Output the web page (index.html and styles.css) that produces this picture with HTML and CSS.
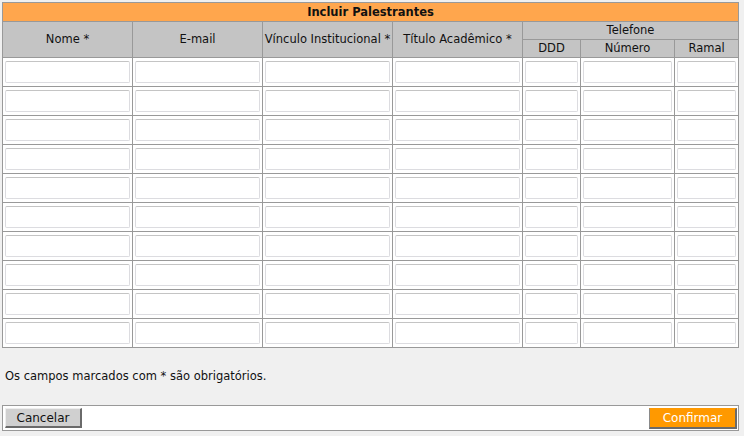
FILE: index.html
```html
<!DOCTYPE html>
<html lang="pt">
<head>
<meta charset="utf-8">
<title>Incluir Palestrantes</title>
<link rel="stylesheet" href="styles.css">
</head>
<body>
<div class="page">
  <table class="grid">
    <colgroup>
      <col class="c-wide"><col class="c-wide"><col class="c-wide"><col class="c-wide">
      <col class="c-ddd"><col class="c-num"><col class="c-ramal">
    </colgroup>
    <thead>
      <tr><th class="title" colspan="7">Incluir Palestrantes</th></tr>
      <tr class="h1">
        <th rowspan="2">Nome *</th>
        <th rowspan="2">E-mail</th>
        <th rowspan="2">Vínculo Institucional *</th>
        <th rowspan="2">Título Acadêmico *</th>
        <th colspan="3">Telefone</th>
      </tr>
      <tr class="h2">
        <th>DDD</th>
        <th>Número</th>
        <th>Ramal</th>
      </tr>
    </thead>
    <tbody>
      <tr><td><input class="field"></td><td><input class="field"></td><td><input class="field"></td><td><input class="field"></td><td><input class="field"></td><td><input class="field"></td><td><input class="field"></td></tr>
      <tr><td><input class="field"></td><td><input class="field"></td><td><input class="field"></td><td><input class="field"></td><td><input class="field"></td><td><input class="field"></td><td><input class="field"></td></tr>
      <tr><td><input class="field"></td><td><input class="field"></td><td><input class="field"></td><td><input class="field"></td><td><input class="field"></td><td><input class="field"></td><td><input class="field"></td></tr>
      <tr><td><input class="field"></td><td><input class="field"></td><td><input class="field"></td><td><input class="field"></td><td><input class="field"></td><td><input class="field"></td><td><input class="field"></td></tr>
      <tr><td><input class="field"></td><td><input class="field"></td><td><input class="field"></td><td><input class="field"></td><td><input class="field"></td><td><input class="field"></td><td><input class="field"></td></tr>
      <tr><td><input class="field"></td><td><input class="field"></td><td><input class="field"></td><td><input class="field"></td><td><input class="field"></td><td><input class="field"></td><td><input class="field"></td></tr>
      <tr><td><input class="field"></td><td><input class="field"></td><td><input class="field"></td><td><input class="field"></td><td><input class="field"></td><td><input class="field"></td><td><input class="field"></td></tr>
      <tr><td><input class="field"></td><td><input class="field"></td><td><input class="field"></td><td><input class="field"></td><td><input class="field"></td><td><input class="field"></td><td><input class="field"></td></tr>
      <tr><td><input class="field"></td><td><input class="field"></td><td><input class="field"></td><td><input class="field"></td><td><input class="field"></td><td><input class="field"></td><td><input class="field"></td></tr>
      <tr><td><input class="field"></td><td><input class="field"></td><td><input class="field"></td><td><input class="field"></td><td><input class="field"></td><td><input class="field"></td><td><input class="field"></td></tr>
    </tbody>
  </table>
  <p class="note">Os campos marcados com * são obrigatórios.</p>
  <div class="actions">
    <button class="btn btn-cancel" type="button">Cancelar</button>
    <button class="btn btn-confirm" type="button">Confirmar</button>
  </div>
</div>
</body>
</html>
```
FILE: styles.css
```css
html, body {
  margin: 0;
  padding: 0;
  background: #f0f0f0;
}
body {
  font-family: "DejaVu Sans", Verdana, sans-serif;
  font-size: 11.5px;
  color: #111;
}
.page {
  width: 737px;
  padding: 2px 0 0 2px;
}
.grid {
  width: 736px;
  table-layout: fixed;
  border-collapse: collapse;
  border: 1px solid #999;
  background: #fff;
}
.c-wide { width: 130px; }
.c-ddd { width: 58px; }
.c-num { width: 94px; }
.c-ramal { width: 64px; }
.grid th {
  border: 1px solid #999;
  background: #c4c4c4;
  font-weight: normal;
  color: #111;
  padding: 0;
  height: 17px;
  line-height: 13px;
  white-space: nowrap;
}
.grid th.title {
  background: #ffa64d;
  font-weight: bold;
  height: 18px;
  color: #111;
}
.grid td {
  border: 1px solid #999;
  padding: 3px 2px;
  height: 22px;
  background: #fff;
}
.field {
  display: block;
  box-sizing: border-box;
  width: 100%;
  height: 22px;
  margin: 0;
  padding: 0 2px;
  border: 1px solid #dcdce0;
  border-top-color: #c4c4c4;
  border-radius: 2px;
  background: #fff;
  font: inherit;
}
.note {
  margin: 22px 0 0 3px;
  line-height: 13px;
}
.actions {
  margin-top: 22px;
  border: 1px solid #999;
  background: #fff;
  display: flex;
  justify-content: space-between;
  align-items: flex-start;
  padding: 2px 1px 0 2px;
  box-sizing: content-box;
  width: 732px;
  height: 22px;
}
.btn {
  font-family: "DejaVu Sans", Verdana, sans-serif;
  font-size: 12px;
  line-height: 14px;
  padding: 0;
  margin: 0;
  height: 20px;
  border-style: solid;
  border-width: 1px 2px 2px 1px;
}
.btn-cancel {
  width: 77px;
  background: #d0d0d0;
  color: #111;
  border-color: #eeeeee #6a6a6a #6a6a6a #eeeeee;
}
.btn-confirm {
  width: 88px;
  height: 21px;
  background: #ff9900;
  color: #fff;
  border-color: #ff9900 #6a6a6a #6a6a6a #8a8a8a;
}
```
